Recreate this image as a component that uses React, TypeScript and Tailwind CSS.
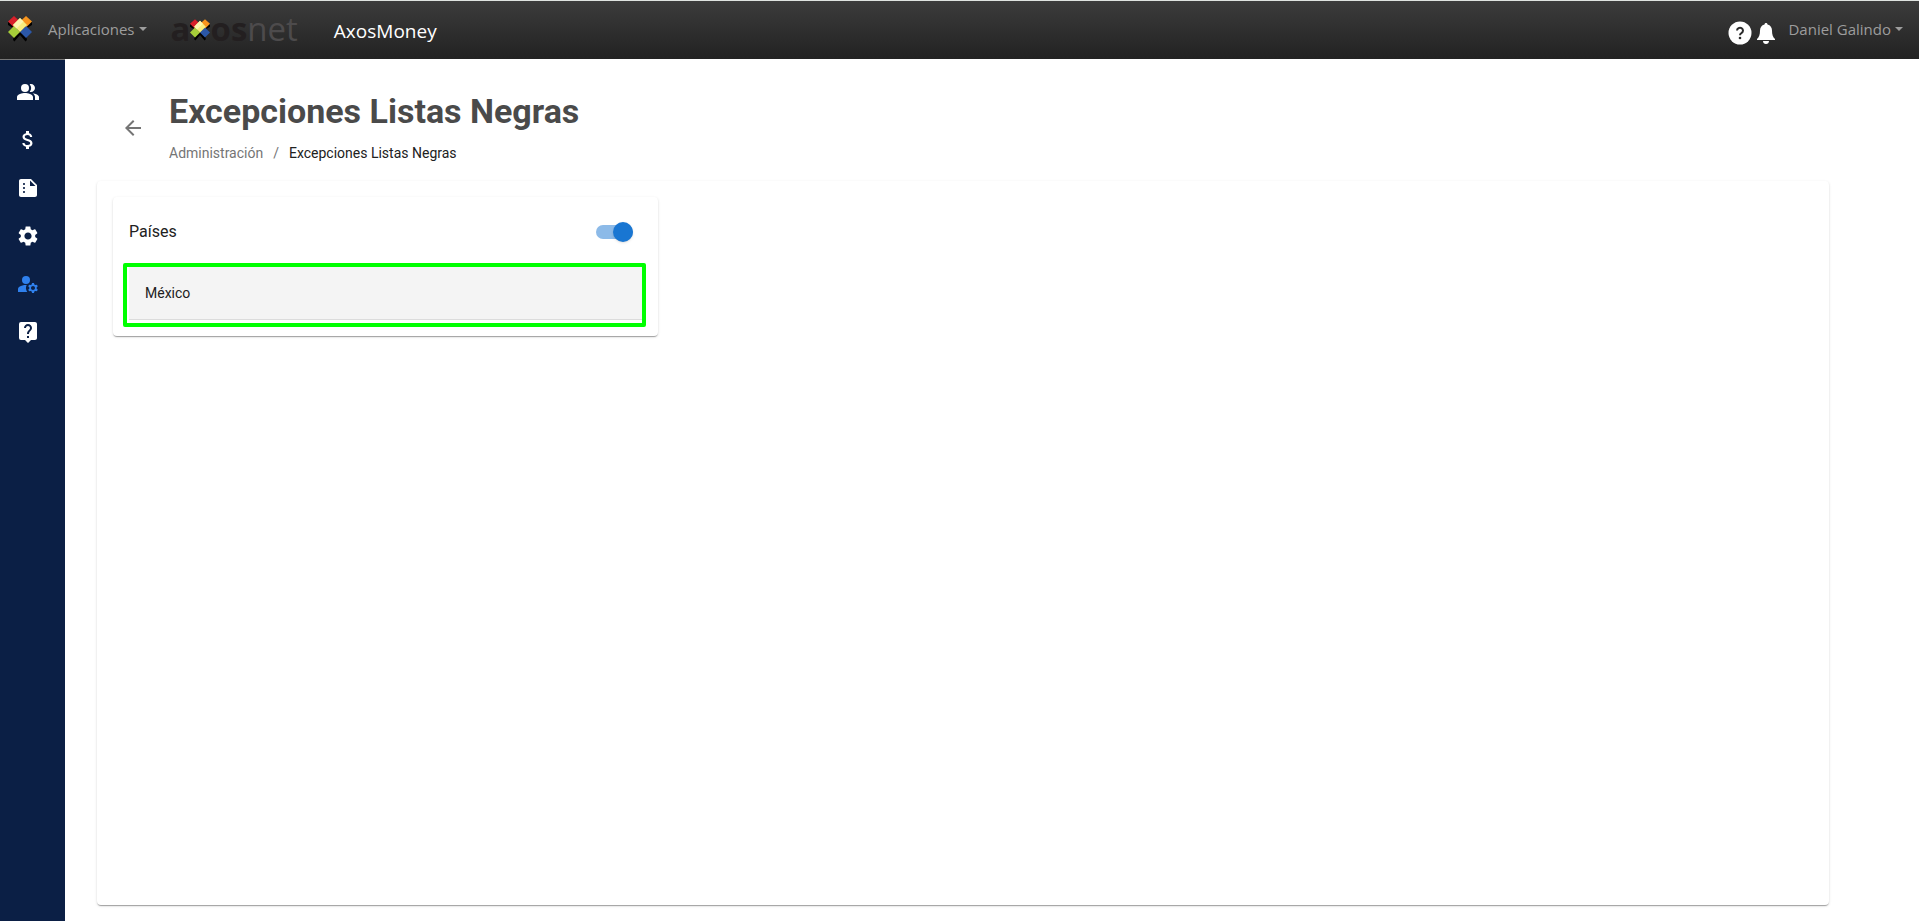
import { useState } from "react";
import {
  MdArrowBack,
  MdAttachMoney,
  MdLiveHelp,
  MdManageAccounts,
  MdPeopleAlt,
  MdSettings,
  MdSummarize,
} from "react-icons/md";

const navItems = [
  { label: "Clientes", icon: MdPeopleAlt },
  { label: "Pagos", icon: MdAttachMoney },
  { label: "Reportes", icon: MdSummarize },
  { label: "Configuración", icon: MdSettings },
  { label: "Administración", icon: MdManageAccounts, active: true },
  { label: "Ayuda", icon: MdLiveHelp },
];

const countries = ["México"];

function AxosMark({ className }: { className?: string }) {
  return (
    <svg viewBox="0 0 24 26" className={className} aria-hidden="true">
      {/* shadows */}
      <path d="M0 6v3l4 2.500 3-2zM24 6v3l-4 2.500-3-2z" fill="#000" />
      <path d="M6 19l6-3v3l-5.500 6.500L5 24zM18 19l-6-3v3l5.500 6.500L19 24z" fill="#000" />
      {/* tiles */}
      <path d="M6 0l6 5.500-6 6L0 5.500z" fill="#d8202a" />
      <path d="M18 0l6 5.500-6 6-6-6z" fill="#f7941d" />
      <path d="M6 10l6 6-6 6-6-6z" fill="#a6ce39" />
      <path d="M18 10l6 6-6 6-6-6z" fill="#2b57a7" />
      <path d="M12 2l7 7-7 7-7-7z" fill="#f9ed7d" />
      <path d="M12 2l3.500 3.500-7 7L5 9z" fill="#fdf6b0" />
    </svg>
  );
}

function Caret() {
  return <span className="border-x-4 border-t-4 border-x-transparent border-t-current" />;
}

function Header() {
  return (
    <header className="flex h-[59px] items-center border-t border-t-[#dfe3e0] bg-linear-to-b from-[#3c3c3c] to-[#222] pr-4 pb-0.5 pl-2 font-['Open_Sans','Noto_Sans',sans-serif] text-[15px]">
      <AxosMark className="h-7 w-6" />
      <button type="button" className="ml-4 flex items-center gap-1 text-[#9d9d9d]">
        Aplicaciones
        <Caret />
      </button>
      <a href="#" aria-label="axosnet" className="ml-6 flex items-center pb-0.5 text-[33px] leading-none">
        <span className="font-bold text-[#231f20]">a</span>
        <AxosMark className="mt-1 h-6 w-5" />
        <span className="font-bold text-[#231f20]">os</span>
        <span className="text-[#4d4b4c]">net</span>
      </a>
      <a href="#" className="mt-1 ml-9 text-[19px] text-white">
        AxosMoney
      </a>
      <div className="ml-auto flex items-center">
        <button type="button" aria-label="Ayuda" className="mt-2">
          <svg viewBox="0 0 24 24" className="size-6">
            <circle cx="12" cy="12" r="11.500" fill="#fff" />
            <path d="M9 9.500a3 2.800 0 1 1 4.500 2.500c-1 .6-1.500 1-1.500 2.200" fill="none" stroke="#2b2b2b" strokeWidth="2" />
            <circle cx="12" cy="17" r="1.300" fill="#2b2b2b" />
          </svg>
        </button>
        <button type="button" aria-label="Notificaciones" className="mt-2 ml-1">
          <svg viewBox="0 0 20 22" className="h-6 w-5" fill="#fff">
            <path d="M10 1c1 0 1.500.6 1.500 1.500C14.500 3.200 16 5.500 16 8.500c0 4 .8 6.500 3 8.500v1H1v-1c2.200-2 3-4.500 3-8.500 0-3 1.500-5.300 4.500-6C8.500 1.600 9 1 10 1zM7 19h6c0 1.700-1.300 3-3 3s-3-1.300-3-3z" />
          </svg>
        </button>
        <button type="button" className="ml-3 flex items-center gap-1 text-[#9d9d9d]">
          Daniel Galindo
          <Caret />
        </button>
      </div>
    </header>
  );
}

function Sidebar() {
  return (
    <nav className="flex w-[65px] shrink-0 flex-col gap-6 border-t border-t-[#777] bg-[#0b1f45] pt-5 pl-4">
      {navItems.map(({ label, icon: Icon, active }) => (
        <a key={label} href="#" aria-label={label} className={active ? "text-[#2f80ed]" : "text-white"}>
          <Icon className="size-6" />
        </a>
      ))}
    </nav>
  );
}

function Toggle({ checked, onChange }: { checked: boolean; onChange: (value: boolean) => void }) {
  return (
    <span className="relative flex h-5 w-[37px] items-center">
      <input
        id="paises"
        type="checkbox"
        role="switch"
        checked={checked}
        onChange={(e) => onChange(e.target.checked)}
        className="peer h-3.5 w-full cursor-pointer appearance-none rounded-full bg-black/40 checked:bg-[#8cbae8]"
      />
      <span className="pointer-events-none absolute left-0 size-5 rounded-full bg-white shadow-sm peer-checked:right-0 peer-checked:left-auto peer-checked:bg-[#1976d2]" />
    </span>
  );
}

export default function App() {
  const [enabled, setEnabled] = useState(true);

  return (
    <div className="flex min-h-screen flex-col bg-white font-['Roboto',sans-serif] text-[#212121]">
      <Header />
      <div className="flex flex-1">
        <Sidebar />
        <main className="flex flex-1 flex-col pt-7 pr-[90px] pb-4 pl-8">
          {/* Page title */}
          <div className="mb-3 flex items-center pl-6">
            <button type="button" aria-label="Regresar" className="mr-6 text-[#757575]">
              <MdArrowBack className="size-6" />
            </button>
            <div className="pb-1.5">
              <h1 className="text-[34px] leading-12 font-bold text-[#4a4a4a]">Excepciones Listas Negras</h1>
              <nav aria-label="Ruta" className="mt-2 flex gap-2.5 text-sm leading-5">
                <a href="#" className="text-[#757575]">
                  Administración
                </a>
                <span className="text-[#757575]">/</span>
                <span>Excepciones Listas Negras</span>
              </nav>
            </div>
          </div>

          {/* Content */}
          <section className="grid flex-1 grid-cols-3 items-start gap-8 rounded bg-white p-4 shadow-[0_2px_1px_-1px_rgba(0,0,0,0.2),0_1px_1px_rgba(0,0,0,0.14),0_1px_3px_rgba(0,0,0,0.12)]">
            <div className="rounded bg-white pt-[15px] pr-3 pb-[9px] pl-2.5 shadow-[0_2px_1px_-1px_rgba(0,0,0,0.2),0_1px_1px_rgba(0,0,0,0.14),0_1px_3px_rgba(0,0,0,0.12)]">
              <div className="flex h-10 items-center justify-between pr-[13px] pl-1.5">
                <label htmlFor="paises">Países</label>
                <Toggle checked={enabled} onChange={setEnabled} />
              </div>
              {enabled && (
                <ul className="mt-[11px] rounded-xs border-4 border-[#00ff00] pb-[3px] pl-0.5">
                  {countries.map((country) => (
                    <li key={country} className="border-b border-[#dcdcdc] bg-[#f4f4f4] px-4 py-4 text-sm">
                      {country}
                    </li>
                  ))}
                </ul>
              )}
            </div>
          </section>
        </main>
      </div>
    </div>
  );
}
